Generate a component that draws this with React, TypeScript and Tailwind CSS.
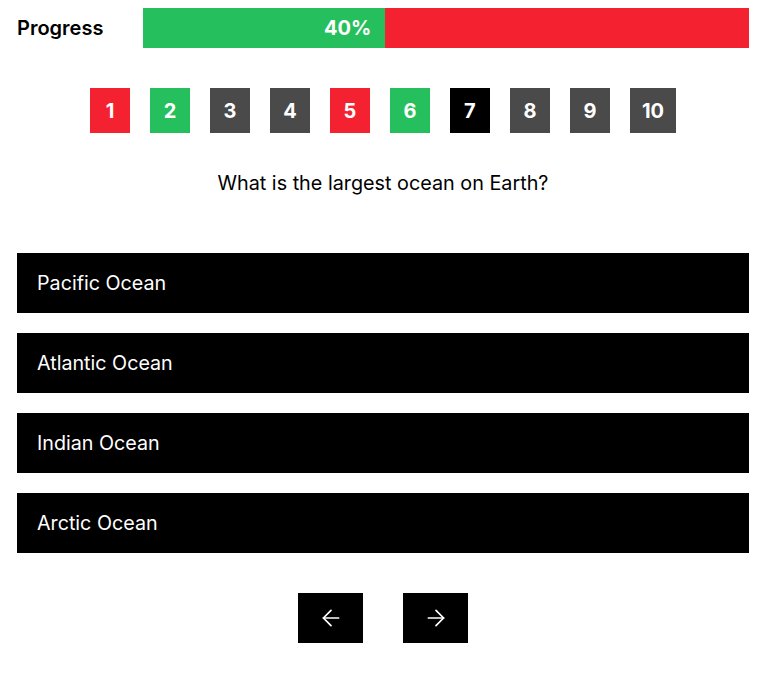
import React from "react";

const nums: { n: number; c: string }[] = [
  { n: 1, c: "bg-[#f42231]" },
  { n: 2, c: "bg-[#26bf5d]" },
  { n: 3, c: "bg-[#4a4a4a]" },
  { n: 4, c: "bg-[#4a4a4a]" },
  { n: 5, c: "bg-[#f42231]" },
  { n: 6, c: "bg-[#26bf5d]" },
  { n: 7, c: "bg-black" },
  { n: 8, c: "bg-[#4a4a4a]" },
  { n: 9, c: "bg-[#4a4a4a]" },
  { n: 10, c: "bg-[#4a4a4a]" },
];

const answers = ["Pacific Ocean", "Atlantic Ocean", "Indian Ocean", "Arctic Ocean"];

export default function App() {
  return (
    <div
      className="w-[768px] h-[673px] bg-white pl-[17px] pt-[8px]"
      style={{ fontFamily: "Inter, 'Noto Sans', sans-serif" }}
    >
      <div className="w-[732px] flex flex-col">
        <div className="flex items-center h-[40px]">
          <div className="w-[126px] text-[20px] font-semibold text-black">Progress</div>
          <div className="flex-1 flex h-[40px] bg-[#f42231]">
            <div className="w-[40%] bg-[#26bf5d] flex items-center justify-end pr-[14px] text-white font-bold text-[20px]">
              40%
            </div>
          </div>
        </div>
        <div className="flex justify-center gap-[20px] mt-[40px]">
          {nums.map((x) => (
            <div
              key={x.n}
              className={`${x.c} min-w-[40px] h-[45px] px-[12px] flex items-center justify-center text-white font-bold text-[20px]`}
            >
              {x.n}
            </div>
          ))}
        </div>
        <div className="text-center text-[19.8px] text-black mt-[36px] leading-[28px]">
          What is the largest ocean on Earth?
        </div>
        <div className="flex flex-col gap-[20px] mt-[56px]">
          {answers.map((a) => (
            <div key={a} className="h-[60px] bg-black text-white text-[19.7px] flex items-center pl-[20px] pt-[2px]">
              {a}
            </div>
          ))}
        </div>
        <div className="flex justify-center gap-[40px] mt-[40px]">
          <div className="w-[65px] h-[50px] bg-black flex items-center justify-center">
            <svg width="26" height="26" viewBox="0 0 24 24" fill="none" stroke="white" strokeWidth="1.6" strokeLinecap="round" strokeLinejoin="round">
              <path d="M19 12H5" />
              <path d="M12 19l-7-7 7-7" />
            </svg>
          </div>
          <div className="w-[65px] h-[50px] bg-black flex items-center justify-center">
            <svg width="26" height="26" viewBox="0 0 24 24" fill="none" stroke="white" strokeWidth="1.6" strokeLinecap="round" strokeLinejoin="round">
              <path d="M5 12h14" />
              <path d="M12 5l7 7-7 7" />
            </svg>
          </div>
        </div>
      </div>
    </div>
  );
}
